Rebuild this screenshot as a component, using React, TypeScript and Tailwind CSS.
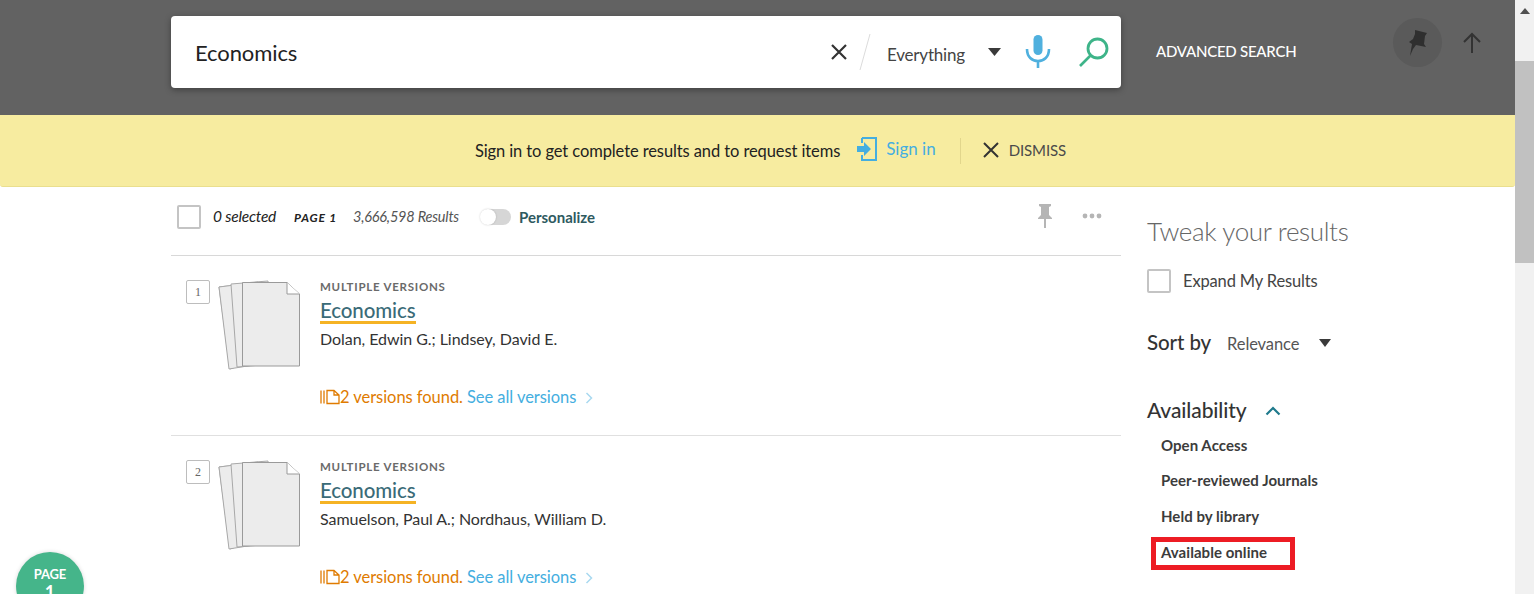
import React from "react";

const font = { fontFamily: '"Lato","Noto Sans",sans-serif' };

function Stack() {
  return (
    <svg width="84" height="94" viewBox="0 0 84 94" className="shrink-0">
      <path d="M1 8 L18 6 L18 88 L12 90 Z" transform="translate(0,0)" fill="#ececec" stroke="#a8a8a8" strokeWidth="1" />
      <path d="M1 8 L40 3 L60 82 L11 90 Z" fill="#ececec" stroke="#a8a8a8" strokeWidth="1" />
      <path d="M13 5 L50 2 L56 85 L19 88 Z" fill="#ececec" stroke="#a8a8a8" strokeWidth="1" />
      <path d="M24.5 3.5 H69 L81.5 15 V87 H24.5 Z" fill="#ececec" stroke="#9a9a9a" strokeWidth="1" />
      <path d="M69 3.5 V15 H81.5" fill="#fff" stroke="#9a9a9a" strokeWidth="1" />
    </svg>
  );
}

function Result({ n, author, last }: { n: number; author: string; last?: boolean }) {
  return (
    <div className={`flex pl-[15px] pt-[24px] h-[180px] ${last ? "" : "border-b border-[#e0e0e0]"}`}>
      <div className="w-[24px] h-[24px] border border-[#bdbdbd] rounded-[2px] text-[12px] text-[#666] flex items-center justify-center shrink-0" style={{ fontFamily: '"Liberation Serif",serif' }}>
        {n}
      </div>
      <div className="ml-[8px] -mt-[1px]"><Stack /></div>
      <div className="ml-[18px] flex flex-col items-start">
        <div className="text-[11.5px] leading-[14px] font-bold tracking-[0.75px] text-[#6a6a6a]">MULTIPLE VERSIONS</div>
        <div className="mt-[4px] text-[20.5px] leading-[24px] text-[#3a6b78] border-b-[3px] border-[#f5b324] font-medium h-[26px] tracking-[-0.1px]">Economics</div>
        <div className="mt-[4px] text-[16px] leading-[22px] text-[#333] tracking-[-0.05px]">{author}</div>
        <div className="mt-[36px] flex items-center text-[16.5px] leading-[22px] tracking-[-0.05px]">
          <svg width="20" height="16" viewBox="0 0 20 16" fill="none" stroke="#e07b00" strokeWidth="1.3">
            <path d="M1 1.5 V14.5 M4 1.5 V14.5 M7 1.5 H14 L19 6 V14.5 H7 Z M14 1.5 V6 H19" />
          </svg>
          <span className="text-[#e07b00]">2 versions found.</span>
          <span className="text-[#44aee0] ml-[4px]">See all versions</span>
          <svg width="8" height="12" viewBox="0 0 8 12" fill="none" stroke="#a9d9f0" strokeWidth="1.5" className="ml-[9px] mt-[2px]"><path d="M1.5 1 L6.5 6 L1.5 11" /></svg>
        </div>
      </div>
    </div>
  );
}

function Check() {
  return <div className="w-[24px] h-[24px] border-2 border-[#c4c4c4] rounded-[2px] bg-white shrink-0" />;
}

export default function App() {
  return (
    <div className="relative flex h-[594px] w-[1534px] overflow-hidden bg-white" style={font}>
      <div className="w-[1515px] shrink-0 flex flex-col">
        {/* search header */}
        <div className="h-[115px] bg-[#626262] flex items-start pl-[171px] pt-[16px] shrink-0">
          <div className="w-[950px] h-[72px] bg-white rounded-[4px] shadow-[0_2px_6px_rgba(0,0,0,0.35)] flex items-center pl-[24px]">
            <div className="text-[22px] text-[#222] flex-1 tracking-[-0.1px]">Economics</div>
            <svg width="18" height="18" viewBox="0 0 18 18" stroke="#333" strokeWidth="2.2" className="mr-[11px]"><path d="M2 2 L16 16 M16 2 L2 16" /></svg>
            <svg width="12" height="36" viewBox="0 0 12 36" stroke="#dcdcdc" strokeWidth="1" className="mr-[16px]"><path d="M11 0 L1 36" /></svg>
            <div className="text-[17px] text-[#444] mt-[6px] w-[101px] tracking-[-0.2px]">Everything</div>
            <svg width="13" height="8" viewBox="0 0 13 8" fill="#3a3a3a" className="mr-[24px] -mt-[0px]"><path d="M0 0 H13 L6.5 8 Z" /></svg>
            <svg width="26" height="34" viewBox="0 0 26 34" className="mr-[27px]" fill="none">
              <rect x="8.5" y="0" width="9" height="20" rx="4.5" fill="#4fb0de" />
              <path d="M2 14 C2 22 7 26 13 26 C19 26 24 22 24 14 M13 26 V33" stroke="#4fb0de" strokeWidth="2.6" />
            </svg>
            <svg width="32" height="32" viewBox="0 0 32 32" fill="none" stroke="#3eb489" className="mr-[11px]">
              <circle cx="19.5" cy="12.5" r="9.5" strokeWidth="2.8" />
              <path d="M12.5 19.5 L2 30" strokeWidth="2.6" />
            </svg>
          </div>
          <div className="ml-[35px] mt-[25px] text-[15px] leading-[20px] text-white font-medium tracking-[-0.25px] w-[237px]">ADVANCED SEARCH</div>
          <div className="w-[49px] h-[49px] rounded-full bg-[#5a5a5a] flex items-center justify-center mt-[2px] shrink-0">
            <svg width="22" height="26" viewBox="0 0 22 26" fill="#2f2f2f"><path d="M8 0 L20 3 L18 6 L17 14 L19 17 L9 15 L6 19 L3 26 L5 14 L2 12 L6 9 L8 4 Z" /></svg>
          </div>
          <svg width="20" height="22" viewBox="0 0 20 22" fill="none" stroke="#333" strokeWidth="2" className="ml-[20px] mt-[16px]"><path d="M10 21 V2 M2 10 L10 2 L18 10" /></svg>
        </div>

        {/* banner */}
        <div className="h-[72px] bg-[#f7eca0] border-b border-[#eadf8e] rounded-b-[3px] flex items-center justify-center pl-[26px] shrink-0">
          <span className="text-[16.5px] text-[#222] tracking-[-0.1px] mt-[2px]">Sign in to get complete results and to request items</span>
          <svg width="20" height="24" viewBox="0 0 20 24" fill="none" className="ml-[17px] -mt-[3px]">
            <path d="M5 1 H19 V23 H5 V18" stroke="#44aee0" strokeWidth="2" />
            <path d="M5 1 V6" stroke="#44aee0" strokeWidth="2" />
            <path d="M0 9 H7 V5 L14 12 L7 19 V15 H0 Z" fill="#44aee0" />
          </svg>
          <span className="ml-[9px] text-[17px] text-[#44aee0] -mt-[4px]">Sign in</span>
          <div className="ml-[24px] w-px h-[26px] bg-[#e2d68c]" />
          <svg width="18" height="18" viewBox="0 0 18 18" stroke="#333" strokeWidth="2" className="ml-[21px] -mt-[2px]"><path d="M2 2 L16 16 M16 2 L2 16" /></svg>
          <span className="ml-[9px] text-[15px] text-[#4a4a4a] tracking-[-0.1px]">DISMISS</span>
        </div>

        {/* content */}
        <div className="flex pl-[171px] flex-1 min-h-0">
          <div className="w-[950px] shrink-0">
            <div className="h-[69px] border-b border-[#d8d8d8] flex items-center pl-[6px] pb-[8px]">
              <Check />
              <span className="ml-[12px] text-[15.5px] italic text-[#222] tracking-[-0.2px]">0 selected</span>
              <span className="ml-[18px] text-[12px] italic font-bold text-[#222] tracking-[0.8px] mt-[2px]">PAGE 1</span>
              <span className="ml-[16px] text-[14.5px] italic text-[#555] tracking-[-0.2px]">3,666,598 Results</span>
              <div className="ml-[22px] relative w-[30px] h-[16px] bg-[#d6d6d6] rounded-full">
                <div className="absolute -left-[1px] top-0 w-[16px] h-[16px] bg-white rounded-full shadow-[0_0_2px_rgba(0,0,0,0.2)]" />
              </div>
              <span className="ml-[8px] text-[15px] font-bold text-[#2e5a5f] tracking-[0px]">Personalize</span>
              <div className="flex-1" />
              <svg width="16" height="24" viewBox="0 0 16 24" fill="#b5b5b5" className="-mt-[2px]"><path d="M2 0 H14 V2 L12 3 V11 L15 14 V15 H9 V24 H7 V15 H1 V14 L4 11 V3 L2 2 Z" /></svg>
              <svg width="20" height="6" viewBox="0 0 20 6" fill="#b5b5b5" className="ml-[29px] mr-[19px] -mt-[2px]"><circle cx="3" cy="3" r="2.4" /><circle cx="10" cy="3" r="2.4" /><circle cx="17" cy="3" r="2.4" /></svg>
            </div>
            <Result n={1} author="Dolan, Edwin G.; Lindsey, David E." />
            <Result n={2} author="Samuelson, Paul A.; Nordhaus, William D." last />
          </div>

          {/* sidebar */}
          <div className="ml-[26px] pt-[27px] flex-1 flex flex-col items-start">
            <div className="text-[26px] leading-[34px] text-[#666] font-light tracking-[-0.35px]">Tweak your results</div>
            <div className="mt-[21px] flex items-center">
              <Check />
              <span className="ml-[12px] text-[16.5px] text-[#444] tracking-[-0.15px]">Expand My Results</span>
            </div>
            <div className="mt-[36px] flex items-center h-[26px]">
              <span className="text-[20.5px] font-medium text-[#333] tracking-[-0.1px]">Sort by</span>
              <span className="ml-[16px] text-[16.5px] text-[#555] mt-[4px] tracking-[-0.1px]">Relevance</span>
              <svg width="12" height="8" viewBox="0 0 12 8" fill="#3a3a3a" className="ml-[20px]"><path d="M0 0 H12 L6 8 Z" /></svg>
            </div>
            <div className="mt-[40px] flex items-center h-[28px]">
              <span className="text-[21px] font-medium text-[#333] tracking-[-0.1px]">Availability</span>
              <svg width="16" height="10" viewBox="0 0 16 10" fill="none" stroke="#1f7a8c" strokeWidth="2.2" className="ml-[18px] mt-[3px]"><path d="M1.5 8.5 L8 2 L14.5 8.5" /></svg>
            </div>
            <div className="mt-[11px] ml-[14px] text-[15px] leading-[20px] font-bold text-[#3c3c3c] tracking-[0.05px] flex flex-col">
              <span>Open Access</span>
              <span className="mt-[15px]">Peer-reviewed Journals</span>
              <span className="mt-[16px]">Held by library</span>
              <span className="mt-[16px] relative">
                Available online
                <span className="absolute -left-[10px] -top-[5px] w-[144px] h-[33px] border-[5px] border-[#ed1c24]" />
              </span>
            </div>
          </div>
        </div>
      </div>

      {/* scrollbar */}
      <div className="w-[19px] bg-[#f1f1f1] flex flex-col items-center shrink-0">
        <svg width="10" height="6" viewBox="0 0 10 6" fill="#505050" className="mt-[8px]"><path d="M5 0 L10 6 H0 Z" /></svg>
        <div className="w-full h-[202px] bg-[#c1c1c1] mt-[47px]" />
      </div>

      {/* page badge */}
      <div className="absolute left-[16px] top-[552px] w-[68px] h-[68px] rounded-full bg-[#45b58a] shadow-[0_0_4px_rgba(0,0,0,0.15)] flex flex-col items-center pt-[14px] text-white font-bold">
        <span className="text-[13px] leading-[16px] tracking-[-0.2px]">PAGE</span>
        <span className="text-[18px] leading-[20px]">1</span>
      </div>
    </div>
  );
}
